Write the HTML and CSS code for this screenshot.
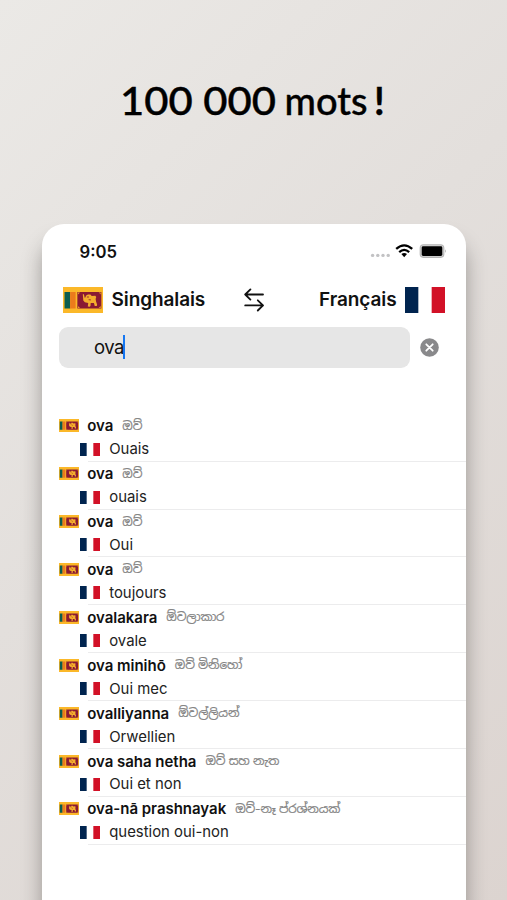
FILE: index.html
```
<!DOCTYPE html>
<html lang="fr">
<head>
<meta charset="utf-8">
<title>Dictionnaire singhalais-français</title>
<link rel="stylesheet" href="styles.css">
</head>
<body>
<svg class="defs" width="0" height="0" aria-hidden="true">
  <symbol id="lk" viewBox="0 0 39 26" preserveAspectRatio="none">
    <rect width="39" height="26" fill="#fbb829"/>
    <rect x="1.5" y="5" width="5.5" height="16.5" fill="#0b5d50"/>
    <rect x="7" y="5" width="5.3" height="16.5" fill="#eb7b1c"/>
    <rect x="14" y="5" width="23.4" height="16.5" fill="#8a1a33"/>
    <path d="M14.6 5.6h2l-2 1.8zM36.8 5.6h-2l2 1.8zM14.6 20.9h2l-2-1.8zM36.8 20.9h-2l2-1.8z" fill="#e89a2a"/>
    <path d="M19.3 7.3h1.1l.7 3.4.9-.4.3-1.5 2-1.3h2.4l1.3 1.4 3.5-.2.9 1.3-.6 1.9.5 2.9 1 2.9-.4 1.2h-2l-.7-3-3.2.2-.2 2.8-.8.9-1.8-.2.4-3.7-3.3-.6-1.5-1.7z" fill="#f5ae2d"/>
    <path d="M23.3 10h2M25 12.7l2.2.2" stroke="#8a1a33" stroke-width=".8"/>
  </symbol>
  <symbol id="fr" viewBox="0 0 39 26" preserveAspectRatio="none">
    <rect width="39" height="26" fill="#fff"/>
    <rect width="13" height="26" fill="#00244f"/>
    <rect x="26" width="13" height="26" fill="#d21127"/>
  </symbol>
</svg>
<h1 class="headline"><span class="figure">100 000</span> <span class="word">mots</span> <span class="bang">!</span></h1>
<main class="phone">
  <div class="status">
    <span class="time">9:05</span>
    <svg class="indicators" width="77" height="16" viewBox="0 0 77 16">
      <g fill="#c2c2c4"><circle cx="2.6" cy="11.4" r="1.7"/><circle cx="7.8" cy="11.4" r="1.7"/><circle cx="13" cy="11.4" r="1.7"/><circle cx="18.2" cy="11.4" r="1.7"/></g>
      <g fill="none" stroke="#000" stroke-width="2.3"><path d="M26.2 4.9Q34.2-2.2 42.2 4.9M29.2 8.1Q34.2 3.6 39.2 8.1"/></g>
      <path d="M31.4 10Q34.2 7.9 37 10L34.2 13.2Z"/>
      <rect x="50.2" y=".8" width="23.6" height="12.6" rx="3.3" fill="#d4d4d4" stroke="#b5b5b5" stroke-width="1.1"/>
      <rect x="51.7" y="2.3" width="20.6" height="9.6" rx="1.4"/>
      <path d="M75 5.2q1.7 1.8 0 3.7z" fill="#aaa"/>
    </svg>
  </div>
  <div class="languages">
    <svg class="flag-lg"><use href="#lk"/></svg>
    <span class="lang from">Singhalais</span>
    <svg class="swap" width="22" height="24" viewBox="0 0 22 24" fill="none" stroke="#111" stroke-width="1.8" stroke-linecap="round" stroke-linejoin="round"><path d="M19 6.5H1.2M6.4 1.4L1.2 6.5l5.2 5.1M1.2 17.4H19M13.8 12.3l5.2 5.1-5.2 5.1"/></svg>
    <span class="lang to">Français</span>
    <svg class="flag-lg"><use href="#fr"/></svg>
  </div>
  <div class="search">
    <div class="field"><span>ova</span><i class="caret"></i></div>
    <svg class="clear" width="19" height="19" viewBox="0 0 19 19"><circle cx="9.5" cy="9.5" r="9.3" fill="#89898b"/><path d="M6.3 6.3l6.4 6.4M12.7 6.3l-6.4 6.4" stroke="#fff" stroke-width="1.8" stroke-linecap="round"/></svg>
  </div>
  <ul class="results">
    <li><div class="source"><svg class="flag-sm"><use href="#lk"/></svg><b>ova</b><span class="script">ඔව්</span></div><div class="target"><svg class="flag-sm"><use href="#fr"/></svg><span>Ouais</span></div></li>
    <li><div class="source"><svg class="flag-sm"><use href="#lk"/></svg><b>ova</b><span class="script">ඔව්</span></div><div class="target"><svg class="flag-sm"><use href="#fr"/></svg><span>ouais</span></div></li>
    <li><div class="source"><svg class="flag-sm"><use href="#lk"/></svg><b>ova</b><span class="script">ඔව්</span></div><div class="target"><svg class="flag-sm"><use href="#fr"/></svg><span>Oui</span></div></li>
    <li><div class="source"><svg class="flag-sm"><use href="#lk"/></svg><b>ova</b><span class="script">ඔව්</span></div><div class="target"><svg class="flag-sm"><use href="#fr"/></svg><span>toujours</span></div></li>
    <li><div class="source"><svg class="flag-sm"><use href="#lk"/></svg><b>ovalakara</b><span class="script">ඕවලාකාර</span></div><div class="target"><svg class="flag-sm"><use href="#fr"/></svg><span>ovale</span></div></li>
    <li><div class="source"><svg class="flag-sm"><use href="#lk"/></svg><b>ova minihō</b><span class="script">ඔව් මිනිහෝ</span></div><div class="target"><svg class="flag-sm"><use href="#fr"/></svg><span>Oui mec</span></div></li>
    <li><div class="source"><svg class="flag-sm"><use href="#lk"/></svg><b>ovalliyanna</b><span class="script">ඕවල්ලියන්</span></div><div class="target"><svg class="flag-sm"><use href="#fr"/></svg><span>Orwellien</span></div></li>
    <li><div class="source"><svg class="flag-sm"><use href="#lk"/></svg><b>ova saha netha</b><span class="script">ඔව් සහ නැත</span></div><div class="target"><svg class="flag-sm"><use href="#fr"/></svg><span>Oui et non</span></div></li>
    <li><div class="source"><svg class="flag-sm"><use href="#lk"/></svg><b>ova-nā prashnayak</b><span class="script">ඔව්-නෑ ප්රශ්නයක්</span></div><div class="target"><svg class="flag-sm"><use href="#fr"/></svg><span>question oui-non</span></div></li>
  </ul>
</main>
</body>
</html>
```

FILE: styles.css
```
* { box-sizing: border-box; }
body {
  margin: 0;
  height: 900px;
  overflow: hidden;
  background: linear-gradient(135deg, #ebe9e6 0%, #e3dfdc 45%, #dcd4d0 100%);
  font-family: Inter, "Noto Sans Sinhala", "Noto Sans", sans-serif;
  color: #111;
}
.defs { position: absolute; }
svg { display: block; flex: none; }
.headline {
  display: flex;
  margin: 0;
  padding: 72px 0 0 119.5px;
  height: 224px;
  font: 500 38px/56px Lato, sans-serif;
  color: #000;
  -webkit-text-stroke: .4px #000;
}
.figure { width: 165px; transform: scaleX(1.1); transform-origin: left; }
.word { width: 89.5px; }
.bang { font-weight: 700; }
.phone {
  width: 424.5px;
  height: 720px;
  margin-left: 41.5px;
  background: #fff;
  border-radius: 22px;
  box-shadow: 0 18px 20px rgba(50, 48, 45, .4);
}
.status {
  display: flex;
  justify-content: space-between;
  height: 55px;
  padding: 17px 19px 0 38px;
}
.time { font-size: 16.7px; font-weight: 600; line-height: 22px; }
.indicators { margin-top: 3px; }
.languages {
  display: flex;
  align-items: center;
  height: 41px;
  padding: 0 21px 0 21.5px;
}
.flag-lg { width: 40px; height: 26px; }
.lang { font-size: 19px; font-weight: 600; line-height: 26px; letter-spacing: -.1px; white-space: nowrap; }
.from { margin-left: 8.5px; width: 132.5px; }
.to { margin-left: auto; margin-right: 8.5px; }
.search { display: flex; align-items: center; height: 41px; margin-top: 6.5px; padding-left: 17px; }
.field {
  display: flex;
  align-items: center;
  width: 351.5px;
  height: 41px;
  padding-left: 35.5px;
  border-radius: 9px;
  background: #e6e6e6;
  font-size: 18.5px;
  letter-spacing: -.5px;
}
.caret { width: 2px; height: 24px; margin-left: -1px; background: #1677f2; }
.clear { margin-left: 10px; }
.results { list-style: none; margin: 46.2px 0 0; padding: 0 0 0 17px; }
.results li { height: 47.92px; }
.source, .target { display: flex; align-items: center; height: 24px; white-space: nowrap; }
.source b { margin-left: 8.7px; font-size: 15px; font-weight: 600; letter-spacing: -.02px; }
.script { margin-left: 9px; font-size: 12px; letter-spacing: -.15px; color: #858585; -webkit-text-stroke: .2px #858585; }
.target { height: 23.92px; margin-left: 29px; border-bottom: 1px solid #ececed; }
.target .flag-sm { margin-left: -7.3px; }
.target span { margin-left: 9px; font-size: 14.9px; color: #222; }
.flag-sm { width: 20px; height: 13px; }
```
